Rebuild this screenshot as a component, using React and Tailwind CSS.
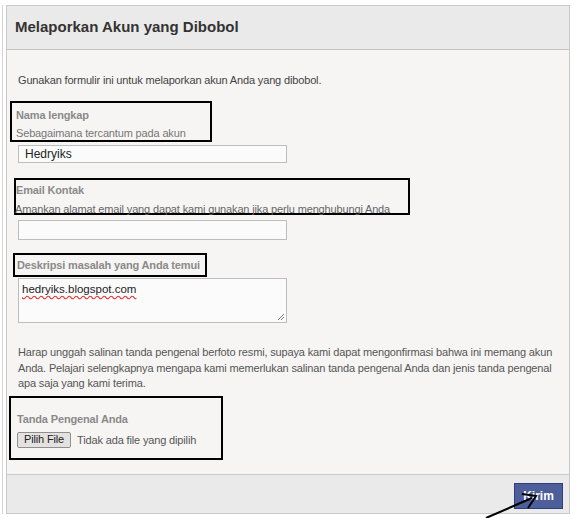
import React from "react";

const font = { fontFamily: '"Liberation Sans", Arial, sans-serif' };

function Annot({ className, children }) {
  return <div className={`border-2 border-black ${className}`}>{children}</div>;
}

export default function App() {
  return (
    <div className="relative w-[574px] h-[518px] bg-white overflow-hidden" style={font}>
      <div className="ml-[2px] mt-[5px] w-[568px] border-l border-[#d4d4d4] pl-[3px]">
        <div className="border border-[#c9c9c9] bg-[#f6f5f4] flex flex-col h-[509px]">
          {/* header */}
          <div className="h-[44px] shrink-0 bg-[#ebeaea] border-b border-[#c4c4c4] flex items-center pl-[8px]">
            <h1 className="text-[15px] font-bold text-[#333]">Melaporkan Akun yang Dibobol</h1>
          </div>

          {/* body */}
          <div className="flex-1 pl-[3px] text-[11px] leading-[14px] tracking-[-0.15px] text-[#555]">
            <p className="mt-[23px] ml-[8px] text-[#444]">
              Gunakan formulir ini untuk melaporkan akun Anda yang dibobol.
            </p>

            <Annot className="mt-[14px] w-[202px] h-[41px] pl-[4px] pt-[5px]">
              <div className="font-bold text-[#8a8a8a]">Nama lengkap</div>
              <div className="mt-[4px] text-[#777]">Sebagaimana tercantum pada akun</div>
            </Annot>
            <div className="mt-[3px] ml-[8px] w-[269px] h-[18px] border border-[#bdbdbd] bg-[#fbfbfb] flex items-center pl-[6px] text-[12px] tracking-normal text-[#222]">
              Hedryiks
            </div>

            <Annot className="mt-[15px] ml-[4px] w-[396px] h-[37px] pt-[3px]">
              <div className="font-bold text-[#8a8a8a]">Email Kontak</div>
              <div className="mt-[5px] text-[#666] -ml-[1px]">
                Amankan alamat email yang dapat kami gunakan jika perlu menghubungi Anda
              </div>
            </Annot>
            <div className="mt-[5px] ml-[8px] w-[269px] h-[20px] border border-[#bdbdbd] bg-[#fbfbfb]" />

            <Annot className="mt-[13px] ml-[3px] w-[194px] h-[24px] pl-[2px] pt-[3px]">
              <div className="font-bold text-[#8a8a8a]">Deskripsi masalah yang Anda temui</div>
            </Annot>
            <div className="relative mt-[1px] ml-[8px] w-[269px] h-[45px] border border-[#bdbdbd] bg-[#fbfbfb] pl-[3px] pt-[3px] text-[11.5px] tracking-normal text-[#222]">
              <span className="underline decoration-wavy decoration-[#d33] underline-offset-2">
                hedryiks.blogspot.com
              </span>
              <svg className="absolute right-[1px] bottom-[1px]" width="9" height="9" viewBox="0 0 9 9">
                <path d="M8 2 L2 8 M8 5 L5 8" stroke="#777" strokeWidth="1" />
              </svg>
            </div>

            <p className="mt-[22px] ml-[8px] w-[545px] leading-[15.5px] text-[#555]">
              Harap unggah salinan tanda pengenal berfoto resmi, supaya kami dapat mengonfirmasi bahwa ini memang akun
              Anda. Pelajari selengkapnya mengapa kami memerlukan salinan tanda pengenal Anda dan jenis tanda pengenal
              apa saja yang kami terima.
            </p>

            <Annot className="mt-[4px] -ml-[1px] w-[214px] h-[64px] pl-[6px] pt-[14px]">
              <div className="font-bold text-[#8a8a8a]">Tanda Pengenal Anda</div>
              <div className="mt-[6px] flex items-center gap-[6px]">
                <button className="h-[16px] px-[6px] border border-[#8f8f8f] bg-[#e4e2e0] rounded-[2px] text-[11px] text-[#222] leading-none">
                  Pilih File
                </button>
                <span className="text-[#555]">Tidak ada file yang dipilih</span>
              </div>
            </Annot>
          </div>

          {/* footer */}
          <div className="h-[39px] shrink-0 bg-[#ebeaea] border-t border-[#c9c9c9] flex items-center justify-end pr-[6px]">
            <button className="w-[49px] h-[26px] mt-[4px] bg-[#4d5e9a] border border-[#2f3f78] text-white text-[12px] font-bold">
              Kirim
            </button>
          </div>
        </div>
      </div>

      {/* hand-drawn arrow annotation */}
      <svg className="absolute left-0 top-0 pointer-events-none" width="574" height="518">
        <path d="M486 518 L532 498" stroke="#000" strokeWidth="2" fill="none" />
        <path d="M522 494 L536 496 L528 508" stroke="#000" strokeWidth="2" fill="none" />
      </svg>
    </div>
  );
}
